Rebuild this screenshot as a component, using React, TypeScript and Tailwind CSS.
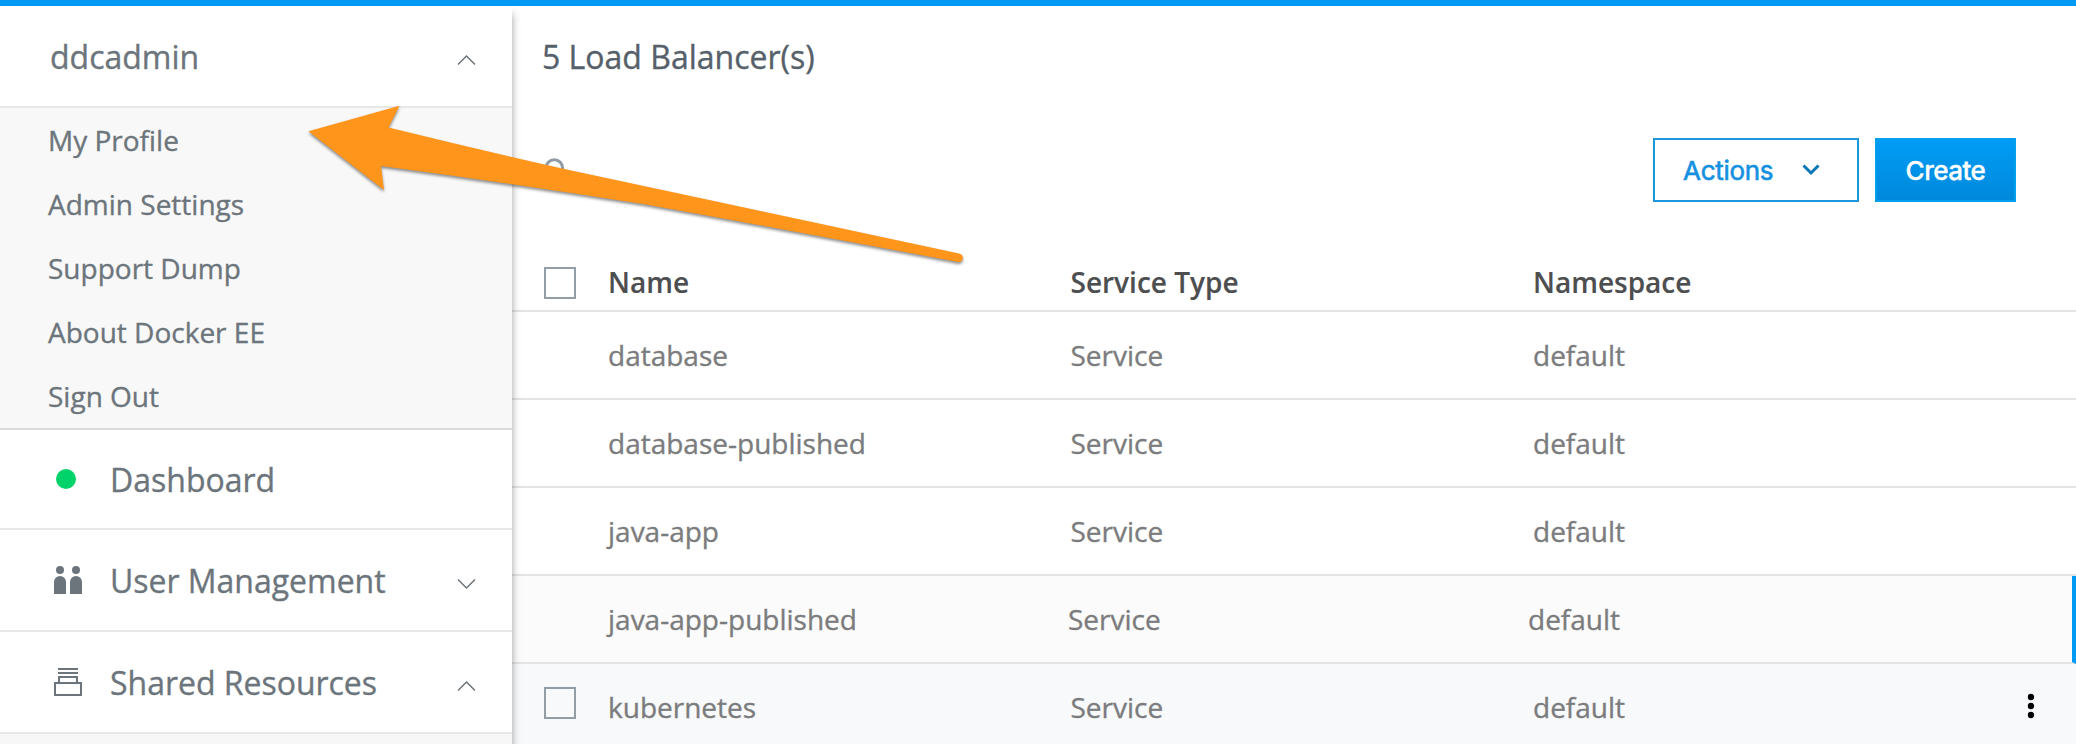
import React from "react";

const menuItems = ["My Profile", "Admin Settings", "Support Dump", "About Docker EE", "Sign Out"];

const rows = [
  { name: "database", type: "Service", namespace: "default" },
  { name: "database-published", type: "Service", namespace: "default" },
  { name: "java-app", type: "Service", namespace: "default" },
  { name: "java-app-published", type: "Service", namespace: "default", selected: true },
  { name: "kubernetes", type: "Service", namespace: "default", hovered: true },
];

function Chevron({ up = false }: { up?: boolean }) {
  return (
    <svg width="20" height="12" viewBox="0 0 20 12" fill="none" stroke="#6c757c" strokeWidth="1.5" className="mt-[7px]">
      <path d={up ? "M1 10.5 9.5 2l8.500 8.500" : "M1 1.500 9.500 10l8.500-8.500"} />
    </svg>
  );
}

function UsersIcon() {
  return (
    <svg width="28" height="28" viewBox="0 0 28 28" fill="#6c757c">
      <circle cx="6" cy="4" r="4" />
      <circle cx="22" cy="4" r="4" />
      <path d="M0 28V16a6 6 0 0 1 12 0v12zM16 28V16a6 6 0 0 1 12 0v12z" />
    </svg>
  );
}

function StackIcon() {
  return (
    <svg width="28" height="28" viewBox="0 0 28 28" fill="none" stroke="#6c757c" strokeWidth="2">
      <path d="M4 1h20M4 5h20M5 15V9h18v6M1 15h26v12H1z" />
    </svg>
  );
}

function Checkbox() {
  return <span className="block size-8 border-2 border-[#929da6]" />;
}

function NavRow({ icon, label, chevron }: { icon: React.ReactNode; label: string; chevron?: React.ReactNode }) {
  return (
    <div className="flex h-[102px] shrink-0 items-center border-b-2 border-[#e6e7e8] pr-[35px] pl-[54px] text-[32px]">
      <span className="flex w-[56px]">{icon}</span>
      <span className="flex-1 pt-[2px] tracking-[-0.02px]">{label}</span>
      {chevron}
    </div>
  );
}

function Sidebar() {
  return (
    <aside className="relative z-10 flex w-[512px] shrink-0 flex-col bg-white text-[#6c757c] shadow-[0_8px_8px_rgba(0,0,0,0.38)]">
      <div className="flex h-[102px] shrink-0 items-center justify-between border-b-2 border-[#e6e7e8] pr-[35px] pl-[50px] text-[32px]">
        <span className="pt-[2px]">ddcadmin</span>
        <Chevron up />
      </div>
      <div className="h-[322px] shrink-0 border-b-2 border-[#d9dbdc] bg-[#f8f8f8] pl-[48px] text-[28px]">
        {menuItems.map((item) => (
          <div key={item} className="flex h-16 items-center">{item}</div>
        ))}
      </div>
      <div className="flex h-[100px] shrink-0 items-center border-b-2 border-[#e6e7e8] pl-[56px] text-[32px]">
        <span className="size-5 rounded-full bg-[#00d369]" />
        <span className="pt-[2px] pl-[34px]">Dashboard</span>
      </div>
      <NavRow icon={<UsersIcon />} label="User Management" chevron={<Chevron />} />
      <NavRow icon={<StackIcon />} label="Shared Resources" chevron={<Chevron up />} />
      <div className="flex-1 bg-[#f7f7f8]" />
    </aside>
  );
}

function Arrow() {
  return (
    <svg
      width="670"
      height="170"
      viewBox="300 100 670 170"
      className="pointer-events-none absolute top-[100px] left-[300px] z-20 [filter:drop-shadow(0_2px_1.5px_rgba(0,0,0,0.45))]"
    >
      <path
        fill="#ff951b"
        d="M308.5 131.3 399.5 105.700 388.500 127.5Q480 150 569 170L959 253.500Q963 254.500 963 258 962 262.500 958 262Q760 225 643 204 510 183 381 166L384 190Z"
      />
    </svg>
  );
}

export default function App() {
  return (
    <div className="relative flex h-[744px] w-[2076px] flex-col overflow-hidden bg-white font-['Open_Sans',sans-serif] leading-none [-webkit-text-stroke:0.35px]">
      <div className="relative z-20 h-[6px] shrink-0 bg-[#009af5]" />
      <div className="flex min-h-0 flex-1">
        <Sidebar />
        <main className="flex min-w-0 flex-1 flex-col">
          <h1 className="flex h-[102px] shrink-0 items-center pl-[30px] text-[32px] text-[#56606a]">5 Load Balancer(s)</h1>
          <div className="flex h-[148px] shrink-0 items-start pt-[30px] pr-[60px] pl-[32px] font-['Inter',sans-serif] text-[26px]">
            <svg width="30" height="30" viewBox="0 0 30 30" fill="none" stroke="#8f9ca7" strokeWidth="3" className="mt-[18px]">
              <circle cx="10.3" cy="12" r="8.300" />
              <path d="m16 18 5 5" />
            </svg>
            <button className="ml-auto flex h-16 w-[206px] items-center border-2 border-[#1c96df] pl-[28px] text-[#1590e0] [-webkit-text-stroke:0.6px]">
              <span className="w-[119px] pt-[2px] text-left tracking-[-0.3px]">Actions</span>
              <svg width="18" height="12" viewBox="0 0 18 12" fill="none" stroke="#0a76b8" strokeWidth="3">
                <path d="m1.500 1.500 7.500 7.500 7.500-7.500" />
              </svg>
            </button>
            <button className="ml-4 h-16 w-[141px] border-2 border-[#04a0ee] bg-linear-to-b from-[#009cf5] to-[#0089dc] pt-[2px] font-medium tracking-[-0.5px] text-white">
              Create
            </button>
          </div>
          <div className="flex h-[56px] shrink-0 items-center border-b-2 border-[#e3e4e5] text-[28px] font-semibold text-[#4d4e50] [-webkit-text-stroke:0.1px]">
            <div className="w-[96px] pl-[32px]"><Checkbox /></div>
            <div className="w-[462.500px] pb-[2px]">Name</div>
            <div className="w-[462.500px] pb-[2px]">Service Type</div>
            <div className="pb-[2px]">Namespace</div>
          </div>
          {rows.map((row) => (
            <div
              key={row.name}
              className={
                "flex h-[88px] shrink-0 items-center border-b-2 border-b-[#e3e4e5] text-[28px] text-[#7b7c7d] " +
                (row.selected ? "border-r-4 border-r-[#009af5] bg-[#fbfbfb]" : row.hovered ? "bg-[#f8f9fb]" : "bg-white")
              }
            >
              <div className="w-[96px] pb-[8px] pl-[32px]">{row.hovered && <Checkbox />}</div>
              <div className={row.selected ? "w-[460px]" : "w-[462.500px]"}>{row.name}</div>
              <div className={row.selected ? "w-[460px]" : "w-[462.500px]"}>{row.type}</div>
              <div className="flex-1">{row.namespace}</div>
              {row.hovered && (
                <svg width="8" height="26" viewBox="0 0 8 26" className="mr-[41px] mb-[3px]">
                  <circle cx="4" cy="4" r="3.200" />
                  <circle cx="4" cy="13" r="3.200" />
                  <circle cx="4" cy="22" r="3.200" />
                </svg>
              )}
            </div>
          ))}
        </main>
      </div>
      <Arrow />
    </div>
  );
}
